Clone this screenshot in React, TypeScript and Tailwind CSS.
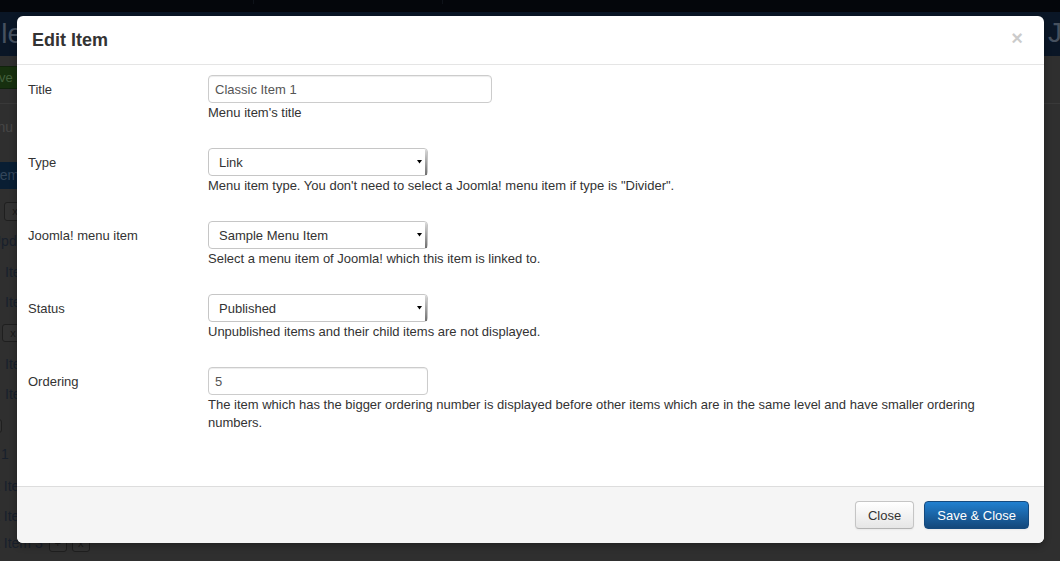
import React from "react";

function Select({ value }: { value: string }) {
  return (
    <div className="w-[220px] h-[28px] border border-[#c6c6c6] rounded-[4px] bg-white flex items-center justify-between pl-[10px] text-[13px] text-[#333]">
      <span className="pt-[2px]">{value}</span>
      <div className="flex items-center self-stretch">
        <svg width="5" height="4" viewBox="0 0 5 4" className="mr-[3px] mt-[-1px]">
          <polygon points="0,0 5,0 2.5,3.5" fill="#000" />
        </svg>
        <div className="w-[2px] self-stretch mt-[1px] bg-gradient-to-b from-[#d8d8d8] to-[#6f6f6f]" />
      </div>
    </div>
  );
}

function Input({ value, w }: { value: string; w: string }) {
  return (
    <div
      className={`${w} h-[28px] border border-[#ccc] rounded-[4px] bg-white flex items-center px-[6px] pt-[1px] text-[13px] text-[#555] shadow-[inset_0_1px_1px_rgba(0,0,0,0.075)]`}
    >
      {value}
    </div>
  );
}

function Row({ label, children, help }: { label: string; children: React.ReactNode; help: string }) {
  return (
    <div className="flex mb-[26px]">
      <div className="w-[180px] shrink-0 pt-[6px] text-[13px] leading-[18px] text-[#333]">{label}</div>
      <div className="flex-1 flex flex-col items-start">
        {children}
        <div className="pt-[1px] text-[13px] leading-[18px] text-[#333]">{help}</div>
      </div>
    </div>
  );
}

export default function App() {
  return (
    <div className="relative w-[1060px] h-[561px] overflow-hidden bg-[#2f2f2f] font-['Liberation_Sans',Arial,sans-serif]">
      {/* background page (under backdrop) */}
      <div className="flex flex-col h-full">
        <div className="h-[12px] bg-[#04060b] flex">
          <div className="w-[253px]" />
          <div className="w-px h-[4px] bg-[#0e1219]" />
          <div className="w-[188px]" />
          <div className="w-px h-[4px] bg-[#0e1219]" />
        </div>
        <div className="h-[44px] bg-[#0a1626] flex items-center text-[28px] text-[#46515f] whitespace-nowrap">
          <span className="-ml-[5px]">lleg</span>
          <div className="flex-1" />
          <span className="w-[14px] -mt-[2px] -mr-[2px]">Joomla</span>
        </div>
        <div className="h-[48px] border-b border-[#393939] bg-[#2f2f2f] flex items-start">
          <div className="mt-[10px] -ml-[20px] w-[60px] h-[23px] bg-[#17300f] border border-[#10220c] rounded-[3px] text-[13px] leading-[21px] text-[#44603d] pl-[18px]">
            ve
          </div>
        </div>
        <div className="flex flex-col text-[14px] leading-[18px] text-[#18202c] whitespace-nowrap">
          <div className="mt-[14px] text-[#474747] -ml-[22px]">Menu</div>
          <div className="mt-[26px] h-[27px] w-[60px] bg-[#091e33] text-[#34465b] leading-[27px] -ml-[8px]">Item</div>
          <div className="mt-[13px] ml-[4px] w-[22px] h-[19px] border border-[#1f1f1f] rounded-[3px] bg-[#333] text-[11px] text-[#1a1a1a] text-center leading-[17px]">x</div>
          <div className="mt-[11px] -ml-[9px]">Updc</div>
          <div className="mt-[13px] ml-[5px]">Item</div>
          <div className="mt-[12px] ml-[5px]">Item</div>
          <div className="mt-[13px] ml-[2px] w-[22px] h-[18px] border border-[#1f1f1f] rounded-[3px] bg-[#333] text-[11px] text-[#1a1a1a] text-center leading-[16px]">x</div>
          <div className="mt-[13px] ml-[5px]">Item</div>
          <div className="mt-[12px] ml-[5px]">Item</div>
          <div className="mt-[16px] -ml-[20px] w-[22px] h-[14px] border border-[#1f1f1f] rounded-[3px] bg-[#333]" />
          <div className="mt-[12px] -ml-[30px]">Item 1</div>
          <div className="mt-[14px] -ml-[4px]">t Item 2</div>
          <div className="mt-[12px] -ml-[4px]">t Item 2</div>
          <div className="mt-[3px] flex items-center -ml-[4px]">
            <span className="mt-[6px]">t Item 3</span>
            <div className="ml-[6px] mt-[6px] w-[18px] h-[17px] border border-[#1f1f1f] rounded-[3px] bg-[#333] text-[11px] text-[#1a1a1a] text-center leading-[15px]">+</div>
            <div className="ml-[5px] mt-[6px] w-[18px] h-[17px] border border-[#1f1f1f] rounded-[3px] bg-[#333] text-[11px] text-[#1a1a1a] text-center leading-[15px]">x</div>
          </div>
        </div>
      </div>

      {/* modal */}
      <div className="absolute left-[17px] top-[16px] w-[1027px] h-[527px] bg-white rounded-[6px] shadow-[0_3px_7px_rgba(0,0,0,0.3)] flex flex-col overflow-hidden">
        <div className="h-[49px] shrink-0 border-b border-[#e5e5e5] flex items-center justify-between pl-[15px] pr-[21px]">
          <h3 className="text-[18px] font-bold leading-[20px] text-[#333]">Edit Item</h3>
          <span className="text-[20px] font-bold leading-[18px] text-black opacity-20 -mt-[4px]">×</span>
        </div>
        <div className="flex-1 pt-[10px] pl-[11px] pr-[15px]">
          <Row label="Title" help="Menu item's title">
            <Input value="Classic Item 1" w="w-[284px]" />
          </Row>
          <Row label="Type" help={'Menu item type. You don\'t need to select a Joomla! menu item if type is "Divider".'}>
            <Select value="Link" />
          </Row>
          <Row label="Joomla! menu item" help="Select a menu item of Joomla! which this item is linked to.">
            <Select value="Sample Menu Item" />
          </Row>
          <Row label="Status" help="Unpublished items and their child items are not displayed.">
            <Select value="Published" />
          </Row>
          <Row
            label="Ordering"
            help="The item which has the bigger ordering number is displayed before other items which are in the same level and have smaller ordering numbers."
          >
            <Input value="5" w="w-[220px]" />
          </Row>
        </div>
        <div className="h-[57px] shrink-0 border-t border-[#ddd] bg-[#f5f5f5] flex items-center justify-end pr-[15px] gap-[10px]">
          <button className="h-[28px] px-[12px] pt-[1px] text-[13px] text-[#333] rounded-[4px] border border-[#c5c5c5] border-b-[#b3b3b3] bg-gradient-to-b from-white to-[#e6e6e6] shadow-[0_1px_2px_rgba(0,0,0,0.05)]">
            Close
          </button>
          <button className="h-[28px] px-[12px] pt-[1px] text-[13px] text-white rounded-[4px] border border-[#154a7e] bg-gradient-to-b from-[#2180d0] to-[#14487b] shadow-[0_1px_2px_rgba(0,0,0,0.05)]">
            Save &amp; Close
          </button>
        </div>
      </div>
    </div>
  );
}
